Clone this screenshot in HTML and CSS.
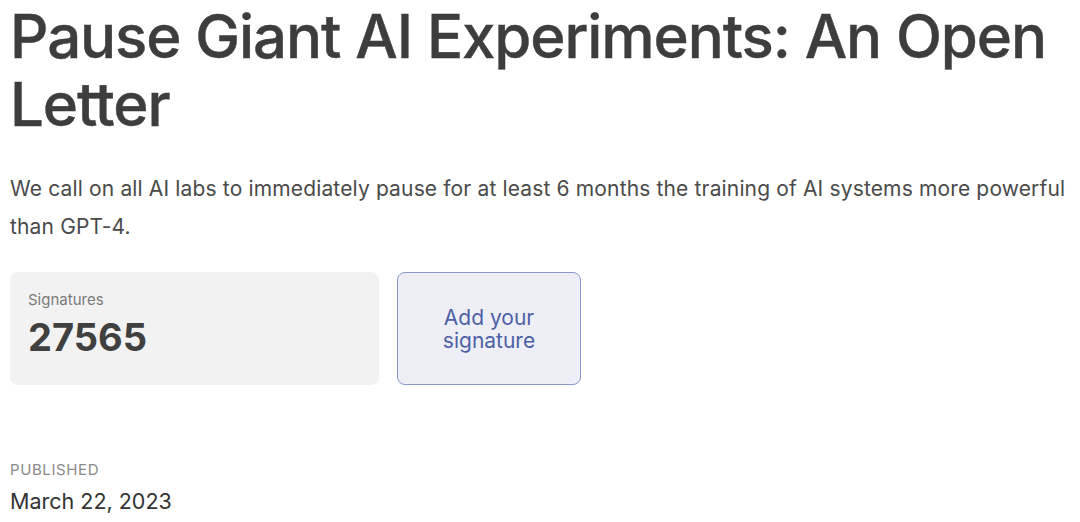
FILE: index.html
```html
<!DOCTYPE html>
<html lang="en">
<head>
<meta charset="utf-8">
<title>Pause Giant AI Experiments: An Open Letter</title>
<link rel="stylesheet" href="styles.css">
</head>
<body>
<main class="page">
  <h1 class="title">Pause Giant AI Experiments: An Open Letter</h1>
  <p class="lede">We call on all AI labs to immediately pause for at least 6 months the training of AI systems more powerful than GPT-4.</p>
  <div class="actions">
    <div class="count-card">
      <div class="count-label">Signatures</div>
      <div class="count-value">27565</div>
    </div>
    <a class="sign-btn" href="#">Add your<br>signature</a>
  </div>
  <div class="meta">
    <div class="meta-label">PUBLISHED</div>
    <div class="meta-value">March 22, 2023</div>
  </div>
</main>
</body>
</html>
```
FILE: styles.css
```css
html, body {
  margin: 0;
  padding: 0;
  background: #ffffff;
}
body {
  font-family: Inter, "Noto Sans", sans-serif;
  color: #404040;
}
.page {
  padding: 2px 4px 0 10px;
}
.title {
  margin: 0;
  font-size: 60px;
  line-height: 68px;
  font-weight: 500;
  color: #3d3d3d;
  letter-spacing: -1.1px;
  -webkit-text-stroke: 0.4px #3d3d3d;
}
.lede {
  margin: 32px 0 0 0;
  font-size: 21px;
  line-height: 38px;
  font-weight: 400;
  color: #4a4a4a;
  letter-spacing: 0.15px;
}
.actions {
  margin-top: 26px;
  display: flex;
  gap: 18px;
}
.count-card {
  width: 369px;
  height: 113px;
  box-sizing: border-box;
  background: #f2f2f2;
  border-radius: 8px;
  padding: 18px 18px 0 18px;
}
.count-label {
  font-size: 15px;
  line-height: 20px;
  color: #7a7a7a;
}
.count-value {
  margin-top: 5px;
  font-size: 38px;
  line-height: 44px;
  font-weight: 700;
  color: #404040;
}
.sign-btn {
  width: 184px;
  height: 113px;
  box-sizing: border-box;
  border: 1px solid #8896cc;
  border-radius: 8px;
  background: #eeeff6;
  display: flex;
  align-items: center;
  justify-content: center;
  text-align: center;
  text-decoration: none;
  color: #4d5fa6;
  font-size: 21px;
  line-height: 23px;
}
.meta {
  margin-top: 75px;
}
.meta-label {
  font-size: 15px;
  line-height: 20px;
  color: #8a8a8a;
  letter-spacing: 0.6px;
}
.meta-value {
  margin-top: 8px;
  font-size: 21.5px;
  line-height: 26px;
  color: #333333;
}
```
